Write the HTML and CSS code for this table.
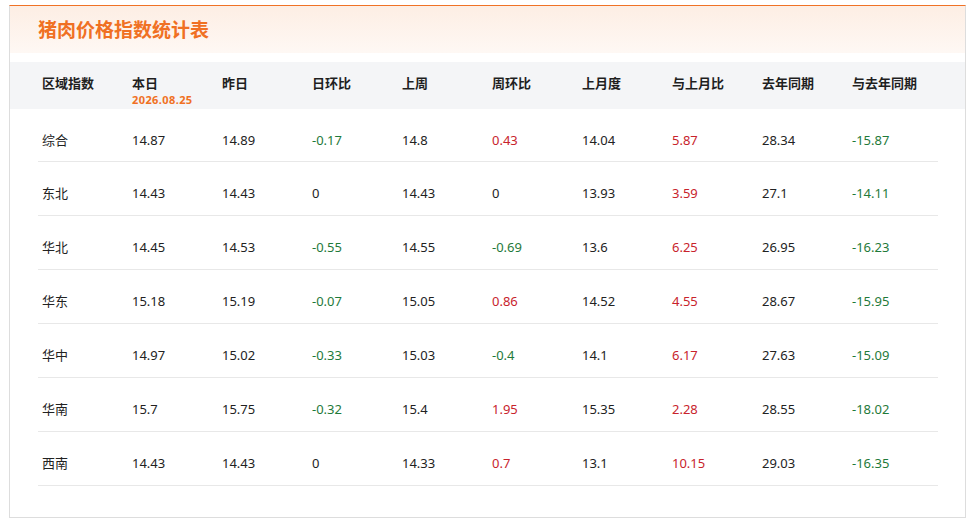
FILE: index.html
```html
<!DOCTYPE html>
<html lang="zh-CN">
<head>
<meta charset="utf-8">
<title>猪肉价格指数统计表</title>
<link rel="stylesheet" href="styles.css">
</head>
<body>
<div class="card">
  <div class="title-bar"><h1 class="title">猪肉价格指数统计表</h1></div>
  <div class="head-band">
    <div class="grid head">
      <div class="cell">区域指数</div>
      <div class="cell">本日<span class="date">2026.08.25</span></div>
      <div class="cell">昨日</div>
      <div class="cell">日环比</div>
      <div class="cell">上周</div>
      <div class="cell">周环比</div>
      <div class="cell">上月度</div>
      <div class="cell">与上月比</div>
      <div class="cell">去年同期</div>
      <div class="cell">与去年同期</div>
    </div>
  </div>
  <div class="body">
    <div class="grid row">
      <div class="cell">综合</div><div class="cell">14.87</div><div class="cell">14.89</div><div class="cell down">-0.17</div><div class="cell">14.8</div><div class="cell up">0.43</div><div class="cell">14.04</div><div class="cell up">5.87</div><div class="cell">28.34</div><div class="cell down">-15.87</div>
    </div>
    <div class="grid row">
      <div class="cell">东北</div><div class="cell">14.43</div><div class="cell">14.43</div><div class="cell">0</div><div class="cell">14.43</div><div class="cell">0</div><div class="cell">13.93</div><div class="cell up">3.59</div><div class="cell">27.1</div><div class="cell down">-14.11</div>
    </div>
    <div class="grid row">
      <div class="cell">华北</div><div class="cell">14.45</div><div class="cell">14.53</div><div class="cell down">-0.55</div><div class="cell">14.55</div><div class="cell down">-0.69</div><div class="cell">13.6</div><div class="cell up">6.25</div><div class="cell">26.95</div><div class="cell down">-16.23</div>
    </div>
    <div class="grid row">
      <div class="cell">华东</div><div class="cell">15.18</div><div class="cell">15.19</div><div class="cell down">-0.07</div><div class="cell">15.05</div><div class="cell up">0.86</div><div class="cell">14.52</div><div class="cell up">4.55</div><div class="cell">28.67</div><div class="cell down">-15.95</div>
    </div>
    <div class="grid row">
      <div class="cell">华中</div><div class="cell">14.97</div><div class="cell">15.02</div><div class="cell down">-0.33</div><div class="cell">15.03</div><div class="cell down">-0.4</div><div class="cell">14.1</div><div class="cell up">6.17</div><div class="cell">27.63</div><div class="cell down">-15.09</div>
    </div>
    <div class="grid row">
      <div class="cell">华南</div><div class="cell">15.7</div><div class="cell">15.75</div><div class="cell down">-0.32</div><div class="cell">15.4</div><div class="cell up">1.95</div><div class="cell">15.35</div><div class="cell up">2.28</div><div class="cell">28.55</div><div class="cell down">-18.02</div>
    </div>
    <div class="grid row">
      <div class="cell">西南</div><div class="cell">14.43</div><div class="cell">14.43</div><div class="cell">0</div><div class="cell">14.33</div><div class="cell up">0.7</div><div class="cell">13.1</div><div class="cell up">10.15</div><div class="cell">29.03</div><div class="cell down">-16.35</div>
    </div>
  </div>
</div>
</body>
</html>
```
FILE: styles.css
```css
* { box-sizing: border-box; }
html, body { background: #ffffff; }
body {
  margin: 5px 8px 0 9px;
  font-family: "Noto Sans", "Noto Sans CJK SC", sans-serif;
  color: #222222;
}
.card {
  width: 957px;
  height: 513px;
  border: 1px solid #dddddd;
  border-top: 1px solid #f07226;
  background: #ffffff;
}
.title-bar {
  height: 47px;
  padding: 11px 0 0 28px;
  background: linear-gradient(180deg, #fdeee4 0%, #fef8f4 100%);
}
.title {
  margin: 0;
  font-size: 19px;
  line-height: 26px;
  font-weight: 700;
  color: #f07023;
}
.head-band {
  margin-top: 9px;
  height: 47px;
  background: #f4f5f7;
  padding: 0 28px;
}
.grid {
  display: grid;
  grid-template-columns: repeat(10, 90px);
  width: 900px;
}
.cell {
  padding-left: 4px;
  font-size: 13px;
  white-space: nowrap;
}
.head .cell {
  padding-top: 12px;
  line-height: 18px;
  font-weight: 700;
  color: #1f1f1f;
}
.date {
  display: block;
  font-size: 11px;
  line-height: 14px;
  font-weight: 700;
  letter-spacing: 0.4px;
  color: #f07023;
  margin-top: 1px;
}
.body { padding: 0 28px; }
.row {
  height: 54px;
  border-bottom: 1px solid #e8e8e8;
}
.row:first-child { height: 53px; }
.row .cell {
  padding-top: 21px;
  line-height: 20px;
}
.up { color: #c8232c; }
.down { color: #1f7a3a; }
```
